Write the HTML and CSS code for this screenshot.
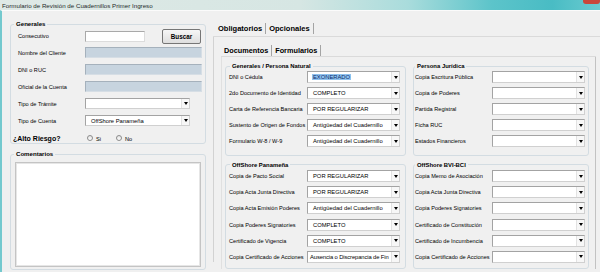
FILE: index.html
```html
<!DOCTYPE html>
<html lang="es">
<head>
  <meta charset="UTF-8">
  <meta name="viewport" content="width=device-width, initial-scale=1.0">
  <title>Formulario de Revisión de Cuadernillos Primer Ingreso</title>
  <link rel="stylesheet" href="styles.css">
</head>
<body>
  <div class="titlebar">
    <span class="title">Formulario de Revisión de Cuadernillos Primer Ingreso</span>
    <span class="close"></span>
  </div>

  <div class="window">
    <!-- left side: client data + comments -->
    <div class="left">
      <fieldset class="box generales">
        <legend>Generales</legend>
        <div class="row first">
          <label>Consecutivo</label>
          <div class="input short"></div>
          <div class="button">Buscar</div>
        </div>
        <div class="row">
          <label>Nombre del Cliente</label>
          <div class="input locked"></div>
        </div>
        <div class="row">
          <label>DNI o RUC</label>
          <div class="input locked"></div>
        </div>
        <div class="row">
          <label>Oficial de la Cuenta</label>
          <div class="input locked"></div>
        </div>
        <div class="row">
          <label>Tipo de Trámite</label>
          <div class="combo wide"><span class="val"></span><span class="arrow"></span></div>
        </div>
        <div class="row">
          <label>Tipo de Cuenta</label>
          <div class="combo wide"><span class="val">OffShore Panameña</span><span class="arrow"></span></div>
        </div>
        <div class="row risk">
          <span class="risk-label">¿Alto Riesgo?</span>
          <span class="radio"></span><span class="opt">Si</span>
          <span class="radio second"></span><span class="opt">No</span>
        </div>
      </fieldset>

      <fieldset class="box comentarios">
        <legend>Comentarios</legend>
        <div class="memo"></div>
      </fieldset>
    </div>

    <!-- right side: document checklist -->
    <div class="right">
      <div class="tabs">
        <span class="tab">Obligatorios</span>
        <span class="tab">Opcionales</span>
      </div>
      <div class="page">
        <div class="tabs inner">
          <span class="tab">Documentos</span>
          <span class="tab">Formularios</span>
        </div>
        <div class="subpage">
          <fieldset class="group top lcol">
            <legend>Generales / Persona Natural</legend>
            <div class="grow"><label>DNI o Cédula</label><div class="combo"><span class="val"><span class="sel">EXONERADO</span></span><span class="arrow"></span></div></div>
            <div class="grow"><label>2do Documento de Identidad</label><div class="combo"><span class="val">COMPLETO</span><span class="arrow"></span></div></div>
            <div class="grow"><label>Carta de Referencia Bancaria</label><div class="combo"><span class="val">POR REGULARIZAR</span><span class="arrow"></span></div></div>
            <div class="grow"><label>Sustento de Origen de Fondos</label><div class="combo"><span class="val">Antigüedad del Cuadernillo</span><span class="arrow"></span></div></div>
            <div class="grow"><label>Formulario W-8 / W-9</label><div class="combo"><span class="val">Antigüedad del Cuadernillo</span><span class="arrow"></span></div></div>
          </fieldset>

          <fieldset class="group top rcol">
            <legend>Persona Jurídica</legend>
            <div class="grow"><label>Copia Escritura Pública</label><div class="combo"><span class="val"></span><span class="arrow"></span></div></div>
            <div class="grow"><label>Copia de Poderes</label><div class="combo"><span class="val"></span><span class="arrow"></span></div></div>
            <div class="grow"><label>Partida Registral</label><div class="combo"><span class="val"></span><span class="arrow"></span></div></div>
            <div class="grow"><label>Ficha RUC</label><div class="combo"><span class="val"></span><span class="arrow"></span></div></div>
            <div class="grow"><label>Estados Financieros</label><div class="combo"><span class="val"></span><span class="arrow"></span></div></div>
          </fieldset>

          <fieldset class="group bottom lcol">
            <legend>OffShore Panameña</legend>
            <div class="grow"><label>Copia de Pacto Social</label><div class="combo"><span class="val">POR REGULARIZAR</span><span class="arrow"></span></div></div>
            <div class="grow"><label>Copia Acta Junta Directiva</label><div class="combo"><span class="val">POR REGULARIZAR</span><span class="arrow"></span></div></div>
            <div class="grow"><label>Copia Acta Emisión Poderes</label><div class="combo"><span class="val">Antigüedad del Cuadernillo</span><span class="arrow"></span></div></div>
            <div class="grow"><label>Copia Poderes Signatories</label><div class="combo"><span class="val">COMPLETO</span><span class="arrow"></span></div></div>
            <div class="grow"><label>Certificado de Vigencia</label><div class="combo"><span class="val">COMPLETO</span><span class="arrow"></span></div></div>
            <div class="grow"><label>Copia Certificado de Acciones</label><div class="combo"><span class="val tight">Ausencia o Discrepancia de Fin</span><span class="arrow"></span></div></div>
          </fieldset>

          <fieldset class="group bottom rcol">
            <legend>OffShore BVI-BCI</legend>
            <div class="grow"><label>Copia Memo de Asociación</label><div class="combo"><span class="val"></span><span class="arrow"></span></div></div>
            <div class="grow"><label>Copia Acta Junta Directiva</label><div class="combo"><span class="val"></span><span class="arrow"></span></div></div>
            <div class="grow"><label>Copia Poderes Signatories</label><div class="combo"><span class="val"></span><span class="arrow"></span></div></div>
            <div class="grow"><label>Certificado de Constitución</label><div class="combo"><span class="val"></span><span class="arrow"></span></div></div>
            <div class="grow"><label>Certificado de Incumbencia</label><div class="combo"><span class="val"></span><span class="arrow"></span></div></div>
            <div class="grow"><label>Copia Certificado de Acciones</label><div class="combo"><span class="val"></span><span class="arrow"></span></div></div>
          </fieldset>
        </div>
      </div>
    </div>
  </div>
</body>
</html>
```

FILE: styles.css
```css
* {
  box-sizing: border-box;
}
body {
  margin: 0;
  width: 600px;
  height: 272px;
  overflow: hidden;
  background-color: #f0f0f0;
  font-family: "Liberation Sans", Arial, sans-serif;
  font-size: 5.6px;
  color: #000;
}

/* window chrome */
.titlebar {
  display: flex;
  align-items: center;
  height: 10px;
  padding-left: 2px;
  background: linear-gradient(90deg, #dfe9e6 0%, #d6e6e3 50%, #a9dcdc 68%, #5cc4ca 82%, #49bcc4 92%, #6acbd0 100%);
}
.title {
  font-size: 6.2px;
  color: #1e2a2a;
}
.close {
  align-self: flex-start;
  margin-left: auto;
  width: 17px;
  height: 4px;
  background-color: #c9473a;
  border-radius: 0 0 3px 3px;
}
.window {
  display: flex;
  height: 262px;
  border-left: 2px solid #74c9ce;
  border-top: 1px solid #fbfbfb;
}

/* group boxes */
fieldset {
  margin: 0;
  padding: 0;
  min-width: 0;
  border: 1px solid #d3dce2;
  border-radius: 3px;
}
legend {
  padding: 0 2px;
  font-weight: bold;
}

/* left column */
.left {
  width: 211px;
  flex: none;
}
.box {
  width: 196px;
  margin-left: 8px;
}
.box legend {
  line-height: 8px;
  font-size: 6.1px;
}
.generales {
  margin-top: 9px;
  padding: 0 0 0 7px;
}
.generales legend {
  margin-left: -4px;
}
.row {
  display: flex;
  align-items: center;
  height: 17px;
}
.row.first {
  height: 16px;
}
.row label {
  width: 67px;
  flex: none;
}
.input {
  height: 11px;
  background-color: #fff;
  border: 1px solid #a9a9a9;
  border-right-color: #dcdcdc;
  border-bottom-color: #dcdcdc;
}
.input.short {
  width: 60px;
}
.input.locked {
  width: 117px;
  background-color: #c7d4df;
  border-color: #a5b1bc #d6dee5 #d6dee5 #a5b1bc;
}
.button {
  width: 39px;
  height: 15px;
  margin-left: 17px;
  border: 1px solid #767676;
  border-radius: 2px;
  background: linear-gradient(#f6f6f6, #dedede);
  font-weight: bold;
  font-size: 6.3px;
  line-height: 13px;
  text-align: center;
}
.row.risk {
  height: 14px;
  align-items: flex-end;
  padding-bottom: 1px;
}
.risk-label {
  width: 74px;
  margin-left: -5px;
  font-weight: bold;
  font-size: 7px;
}
.radio {
  width: 6px;
  height: 6px;
  margin: 0 3px 1px 0;
  border: 1px solid #8c8c8c;
  border-radius: 50%;
  background: linear-gradient(#e4e4e4, #fff);
}
.radio.second {
  margin-left: 15px;
}
.comentarios {
  margin-top: 6px;
  padding: 0 4px 2px;
}
.comentarios legend {
  margin-left: -1px;
}
.memo {
  width: 186px;
  height: 105px;
  margin-top: 4px;
  background-color: #fff;
  border: 1px solid #c4c4c4;
  box-shadow: inset 0 0 0 1px #e6e6e6;
}

/* combos */
.combo {
  display: flex;
  width: 93px;
  height: 12px;
  flex: none;
  background-color: #fff;
  border: 1px solid #a3a3a3;
  border-right-color: #d0d0d0;
  border-bottom-color: #d0d0d0;
  font-size: 5.8px;
}
.combo.wide {
  width: 105px;
  height: 11px;
}
.val {
  flex: 1;
  padding-left: 5px;
  white-space: nowrap;
  overflow: hidden;
  display: flex;
  align-items: center;
}
.val.tight {
  padding-left: 2px;
  letter-spacing: -0.1px;
}
.sel {
  background-color: #8fc2ef;
  color: #0c2c6c;
  padding: 0 1px;
  margin-left: -1px;
}
.arrow {
  width: 8px;
  flex: none;
  display: flex;
  align-items: center;
  justify-content: center;
  border-left: 1px solid #e2e2e2;
  background-color: #f7f7f7;
}
.arrow::before {
  content: "";
  border-left: 2.5px solid transparent;
  border-right: 2.5px solid transparent;
  border-top: 3px solid #000;
}

/* right column: tabs */
.right {
  flex: 1;
  padding-top: 10px;
}
.tabs {
  display: flex;
  align-items: center;
  height: 16px;
  padding-left: 2px;
  border-bottom: 1px solid #dadada;
}
.tab {
  height: 11px;
  padding: 0 3px;
  line-height: 11px;
  font-weight: bold;
  font-size: 7.5px;
  border-right: 1px solid #a4a4a4;
}
.page {
  height: 225px;
  padding: 7px 0 0 7px;
  border-left: 1px solid #d2d2d2;
}
.tabs.inner {
  width: 375px;
  height: 13px;
  padding-left: 0;
}
.tabs.inner .tab {
  font-size: 7.3px;
}
.subpage {
  display: grid;
  grid-template-columns: 181px 176px;
  column-gap: 7px;
  row-gap: 6px;
  width: 375px;
  padding: 6px 6px 0 3px;
  border-left: 1px solid #e0e0e0;
  border-right: 1px solid #c2c2c2;
  height: 212px;
}
.group legend {
  line-height: 6px;
  font-size: 5.9px;
}
.group.lcol {
  padding-left: 3px;
}
.group.lcol legend {
  margin-left: 1px;
}
.group.rcol {
  padding-left: 1px;
}
.group.top {
  padding-bottom: 5px;
}
.group.bottom {
  padding-bottom: 2px;
}
.grow {
  display: flex;
  align-items: center;
  height: 16px;
}
.group.bottom .grow {
  height: 16.2px;
}
.grow label {
  width: 78px;
  flex: none;
  white-space: nowrap;
}
.group.rcol .grow label {
  width: 77px;
}
```
